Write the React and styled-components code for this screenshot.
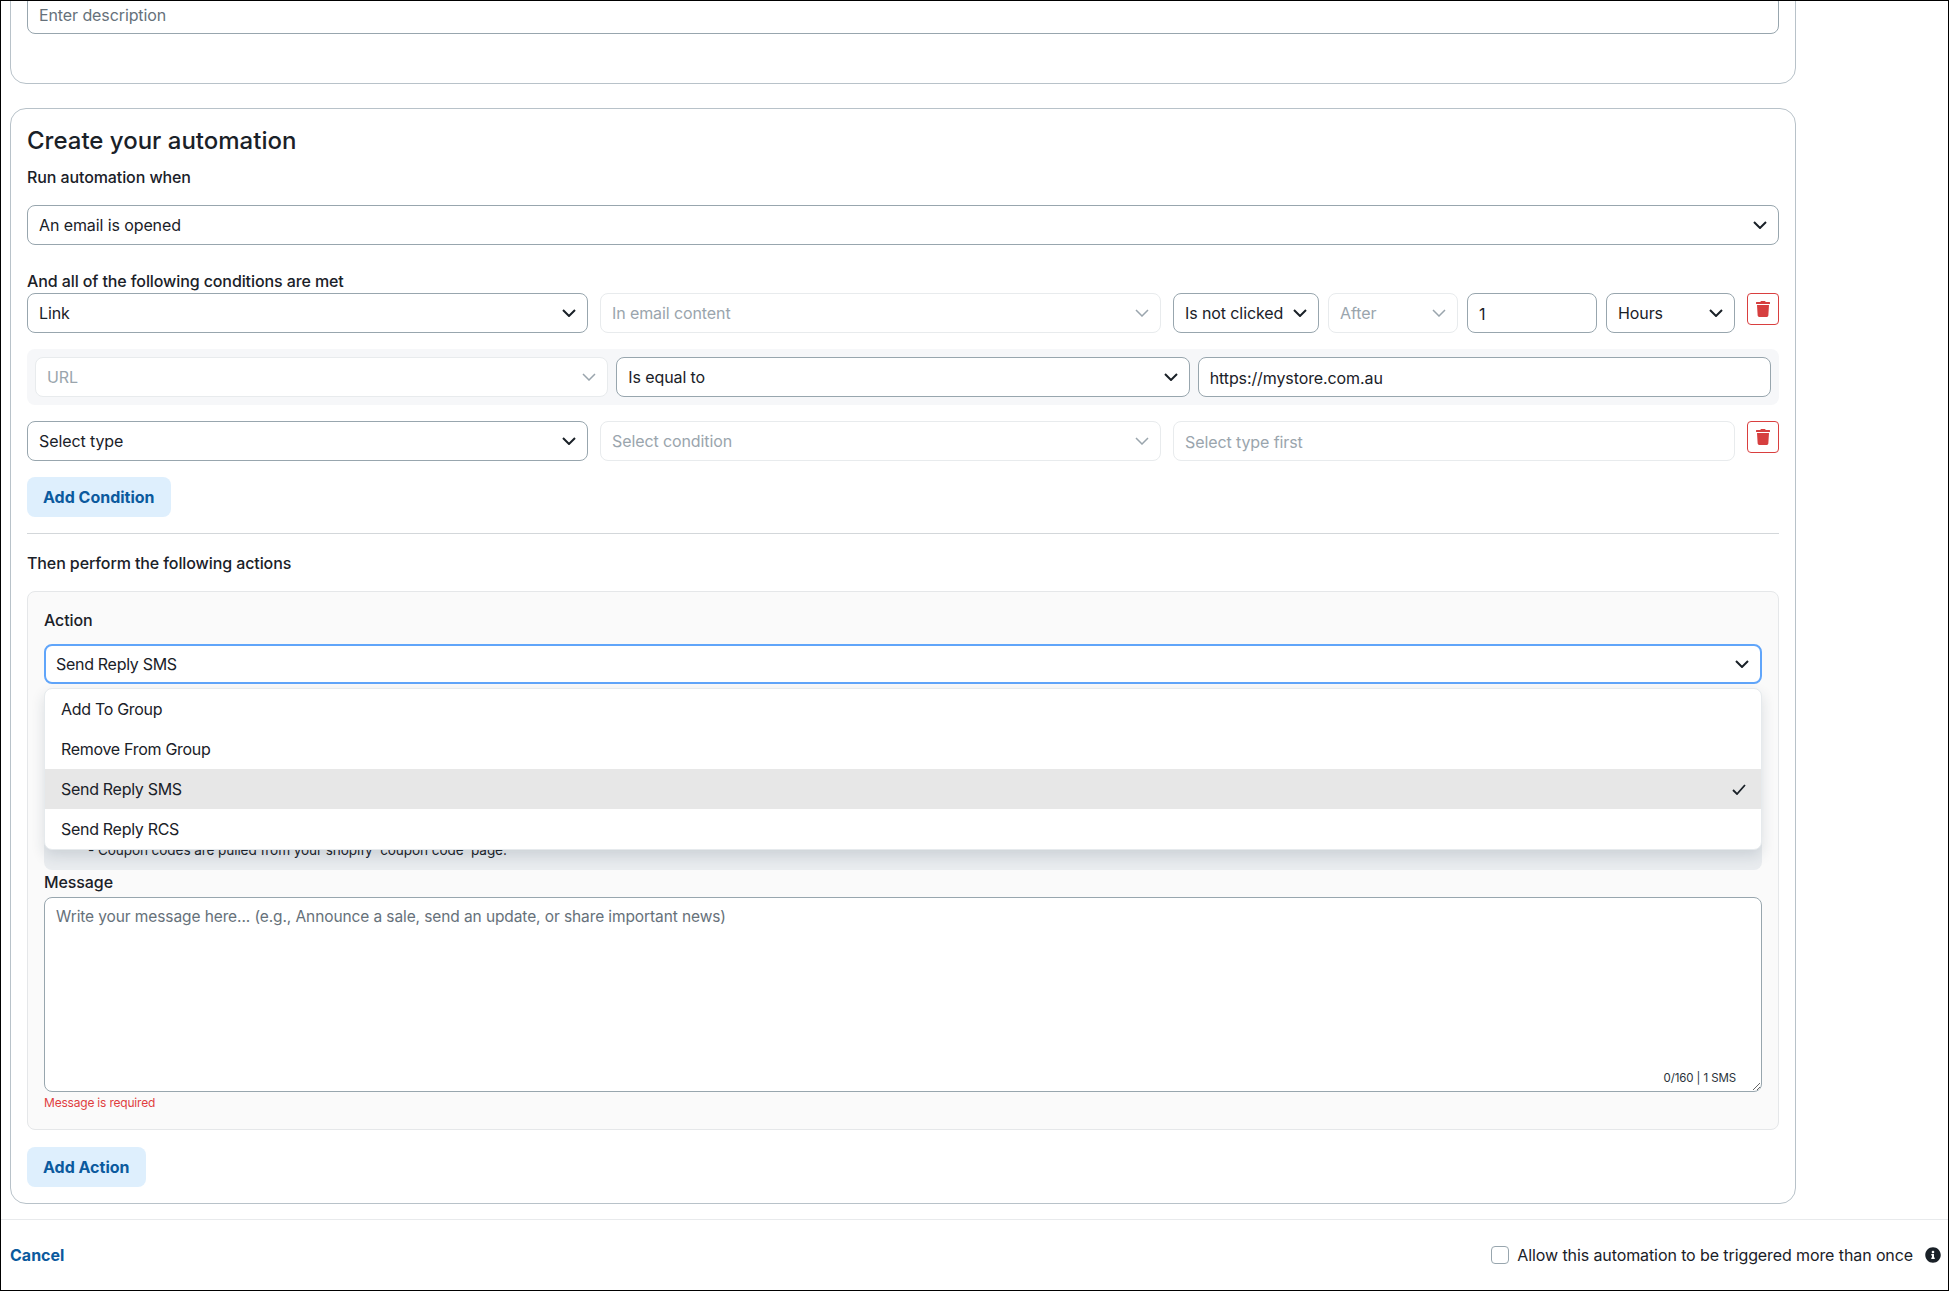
import React from "react";
import styled, { createGlobalStyle } from "styled-components";
import { FaTrash, FaInfoCircle } from "react-icons/fa";

const Global = createGlobalStyle`
  html, body {
    margin: 0;
    padding: 0;
    background: #fff;
  }
  body {
    font-family: "Inter", "Liberation Sans", sans-serif;
    color: #1a2128;
  }
  * {
    box-sizing: border-box;
  }
`;

const Page = styled.div`
  display: flex;
  flex-direction: column;
  width: 1949px;
  height: 1291px;
  border: 1px solid #000;
  overflow: hidden;
  font-size: 16px;
  letter-spacing: -0.1px;
`;

const Scroller = styled.div`
  display: flex;
  flex: none;
  flex-direction: column;
  gap: 24px;
  width: 1786px;
  margin: -16px 0 15px 9px;
`;

const Card = styled.section`
  display: flex;
  flex-direction: column;
  border: 1px solid #b8c2c9;
  border-radius: 16px;
  padding: 16px;
`;

const TopCard = styled(Card)`
  padding-top: 8px;
  padding-bottom: 49px;
`;

const Heading = styled.h2`
  margin: 0 0 8px;
  font-size: 24px;
  line-height: 32px;
  font-weight: 500;
  letter-spacing: 0;
`;

const Label = styled.div`
  font-size: 16px;
  line-height: 24px;
  font-weight: 500;
  margin-bottom: ${(p) => p.$gap || 0}px;
`;

const Control = styled.div`
  display: flex;
  align-items: center;
  justify-content: space-between;
  flex: ${(p) => (p.$w ? "none" : "1")};
  width: ${(p) => (p.$w ? `${p.$w}px` : "auto")};
  height: 40px;
  padding: 0 11px;
  background: #fff;
  border: 1px solid ${(p) => (p.$disabled ? "#e8ebed" : "#98a6ae")};
  border-radius: 8px;
  color: ${(p) => (p.$disabled ? "#9aa5ad" : "#1a2128")};
  white-space: nowrap;
`;

const Chevron = styled.svg`
  flex: none;
  width: 14px;
  height: 8px;
  fill: none;
  stroke: ${(p) => (p.$disabled ? "#9aa5ad" : "#1a2128")};
  stroke-width: ${(p) => (p.$disabled ? 1.5 : 2)};
`;

const TextField = styled.input`
  flex: ${(p) => (p.$w ? "none" : "1")};
  width: ${(p) => (p.$w ? `${p.$w}px` : "auto")};
  min-width: 0;
  height: 40px;
  padding: 2px 11px 0;
  background: #fff;
  border: 1px solid #98a6ae;
  border-radius: 8px;
  color: #1a2128;
  font: inherit;
  letter-spacing: inherit;
  &::placeholder {
    color: #66717a;
    opacity: 1;
  }
  &:disabled {
    border-color: #e8ebed;
  }
  &:disabled::placeholder {
    color: #9aa5ad;
  }
`;

const Row = styled.div`
  display: flex;
  align-items: flex-start;
  gap: 12px;
  margin-bottom: ${(p) => p.$gap ?? 16}px;
`;

const TightGroup = styled.div`
  display: flex;
  gap: 9px;
`;

const SubRow = styled.div`
  display: flex;
  gap: 8px;
  padding: 8px;
  margin-bottom: 16px;
  background: #f6f7f9;
  border-radius: 8px;
`;

const TrashButton = styled.button`
  display: flex;
  align-items: center;
  justify-content: center;
  flex: none;
  width: 32px;
  height: 32px;
  padding: 0;
  background: #fff;
  border: 1px solid #d93f3f;
  border-radius: 4px;
  color: #d63f3f;
  font-size: 16px;
`;

const SoftButton = styled.button`
  align-self: flex-start;
  height: 40px;
  padding: 0 16px;
  border: none;
  border-radius: 8px;
  background: #deeffd;
  color: #0b5a9e;
  font: inherit;
  font-weight: 700;
  letter-spacing: 0;
`;

const Divider = styled.hr`
  width: 100%;
  margin: 16px 0 17px;
  border: none;
  border-top: 1px solid #d3d7da;
`;

const ActionBox = styled.div`
  display: flex;
  flex-direction: column;
  margin-bottom: 17px;
  padding: 16px;
  background: #fafafa;
  border: 1px solid #e5e7e9;
  border-radius: 8px;
`;

const SelectWrap = styled.div`
  display: flex;
  position: relative;
  margin-bottom: 12px;
  letter-spacing: -0.3px;
`;

const FocusedControl = styled(Control)`
  border: 2px solid #60a5fa;
  padding: 0 11px 0 10px;
`;

const Menu = styled.ul`
  position: absolute;
  top: 44px;
  left: 0;
  right: 0;
  z-index: 2;
  margin: 0;
  padding: 0;
  list-style: none;
  overflow: hidden;
  background: #fff;
  border: 1px solid #e6eaed;
  border-radius: 8px;
  box-shadow: 0 6px 14px rgba(30, 50, 70, 0.14);
`;

const MenuItem = styled.li`
  display: flex;
  align-items: center;
  justify-content: space-between;
  height: 40px;
  padding: 0 16px;
  background: ${(p) => (p.$active ? "#e7e7e7" : "transparent")};
`;

const Tick = styled.svg`
  width: 14px;
  height: 11px;
  margin-right: -1px;
  fill: none;
  stroke: #1a2128;
  stroke-width: 1.8;
`;

const InfoNote = styled.div`
  display: flex;
  flex-direction: column;
  justify-content: flex-end;
  height: 174px;
  padding: 0 0 10px 44px;
  background: #e9ecef;
  border-radius: 8px;
  font-size: 13.6px;
  line-height: 20px;
`;

const MessageWrap = styled.div`
  position: relative;
  display: flex;
  margin-top: 3px;
`;

const MessageInput = styled.textarea`
  flex: 1;
  height: 195px;
  padding: 8px 11px;
  background: #fff;
  border: 1px solid #98a6ae;
  border-radius: 8px;
  font: inherit;
  font-size: 15.5px;
  letter-spacing: inherit;
  line-height: 22px;
  &::placeholder {
    color: #66717a;
    opacity: 1;
  }
`;

const Counter = styled.span`
  position: absolute;
  right: 26px;
  bottom: 6px;
  font-size: 11.5px;
  line-height: 16px;
  color: #2a333a;
`;

const ErrorText = styled.div`
  margin-top: 2px;
  margin-bottom: 1px;
  font-size: 12px;
  line-height: 18px;
  color: #e03e3e;
  letter-spacing: -0.2px;
`;

const Footer = styled.footer`
  display: flex;
  align-items: center;
  justify-content: space-between;
  flex: 1;
  padding: 0 7px 0 9px;
  border-top: 1px solid #e8eaec;
`;

const CancelLink = styled.a`
  color: #0b5a9e;
  font-weight: 700;
  letter-spacing: 0;
`;

const AllowGroup = styled.label`
  display: flex;
  align-items: center;
  gap: 8px;
`;

const Checkbox = styled.input`
  appearance: none;
  width: 18px;
  height: 18px;
  margin: 0;
  background: #fff;
  border: 1px solid #98a6ae;
  border-radius: 4px;
`;

const InfoIcon = styled(FaInfoCircle)`
  margin-left: 4px;
  font-size: 16px;
  color: #1a2128;
`;

const Select = ({ value, disabled, w }) => (
  <Control $disabled={disabled} $w={w}>
    {value}
    <Chevron viewBox="0 0 14 8" $disabled={disabled}>
      <path d="M1 1l6 6 6-6" />
    </Chevron>
  </Control>
);

const Trash = () => (
  <TrashButton>
    <FaTrash />
  </TrashButton>
);

const MENU = ["Add To Group", "Remove From Group", "Send Reply SMS", "Send Reply RCS"];

export default function App() {
  return (
    <>
      <Global />
      <Page>
        <Scroller>
          <TopCard>
            <Row $gap={0}>
              <TextField placeholder="Enter description" />
            </Row>
          </TopCard>

          <Card>
            <Heading>Create your automation</Heading>
            <Label $gap={16}>Run automation when</Label>
            <Row $gap={24}>
              <Select value="An email is opened" />
            </Row>
            <Label>And all of the following conditions are met</Label>
            <Row>
              <Select value="Link" w={561} />
              <Select value="In email content" disabled w={561} />
              <TightGroup>
                <Select value="Is not clicked" w={146} />
                <Select value="After" disabled w={130} />
                <TextField defaultValue="1" $w={130} />
                <Select value="Hours" w={129} />
              </TightGroup>
              <Trash />
            </Row>
            <SubRow>
              <Select value="URL" disabled />
              <Select value="Is equal to" />
              <TextField defaultValue="https://mystore.com.au" />
            </SubRow>
            <Row>
              <Select value="Select type" w={561} />
              <Select value="Select condition" disabled w={561} />
              <TextField placeholder="Select type first" disabled $w={562} />
              <Trash />
            </Row>
            <SoftButton>Add Condition</SoftButton>
            <Divider />
            <Label $gap={16}>Then perform the following actions</Label>
            <ActionBox>
              <Label $gap={12}>Action</Label>
              <SelectWrap>
                <FocusedControl>
                  Send Reply SMS
                  <Chevron viewBox="0 0 14 8">
                    <path d="M1 1l6 6 6-6" />
                  </Chevron>
                </FocusedControl>
                <Menu>
                  {MENU.map((item) => (
                    <MenuItem key={item} $active={item === "Send Reply SMS"}>
                      {item}
                      {item === "Send Reply SMS" && (
                        <Tick viewBox="0 0 14 11">
                          <path d="M1 6l4 4 8-9" />
                        </Tick>
                      )}
                    </MenuItem>
                  ))}
                </Menu>
              </SelectWrap>
              <InfoNote>
                <span>- Coupon codes are pulled from your shopify 'coupon code' page.</span>
              </InfoNote>
              <Label>Message</Label>
              <MessageWrap>
                <MessageInput placeholder="Write your message here... (e.g., Announce a sale, send an update, or share important news)" />
                <Counter>0/160 | 1 SMS</Counter>
              </MessageWrap>
              <ErrorText>Message is required</ErrorText>
            </ActionBox>
            <SoftButton>Add Action</SoftButton>
          </Card>
        </Scroller>

        <Footer>
          <CancelLink>Cancel</CancelLink>
          <AllowGroup>
            <Checkbox type="checkbox" />
            Allow this automation to be triggered more than once
            <InfoIcon />
          </AllowGroup>
        </Footer>
      </Page>
    </>
  );
}
